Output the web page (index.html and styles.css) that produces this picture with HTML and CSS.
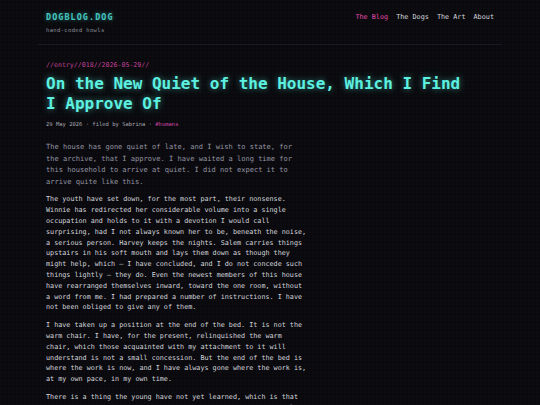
FILE: index.html
```html
<!DOCTYPE html>
<html lang="en">
<head>
<meta charset="utf-8">
<title>On the New Quiet of the House — DOGBLOG.DOG</title>
<link rel="stylesheet" href="styles.css">
</head>
<body>
<header class="site-header">
  <div class="brand">
    <a class="logo" href="#">DOGBLOG.DOG</a>
    <div class="tagline">hand-coded howls</div>
  </div>
  <nav class="nav">
    <a class="nav-link active" href="#">The Blog</a>
    <a class="nav-link" href="#">The Dogs</a>
    <a class="nav-link" href="#">The Art</a>
    <a class="nav-link" href="#">About</a>
  </nav>
</header>
<main class="post">
  <div class="kicker">//entry//018//2026-05-29//</div>
  <h1 class="title">On the New Quiet of the House, Which I Find I Approve Of</h1>
  <div class="meta">29 May 2026 · filed by Sabrina · <span class="tag">#humans</span></div>
  <div class="body">
    <p class="lead">The house has gone quiet of late, and I wish to state, for the archive, that I approve. I have waited a long time for this household to arrive at quiet. I did not expect it to arrive quite like this.</p>
    <p>The youth have set down, for the most part, their nonsense. Winnie has redirected her considerable volume into a single occupation and holds to it with a devotion I would call surprising, had I not always known her to be, beneath the noise, a serious person. Harvey keeps the nights. Salem carries things upstairs in his soft mouth and lays them down as though they might help, which — I have concluded, and I do not concede such things lightly — they do. Even the newest members of this house have rearranged themselves inward, toward the one room, without a word from me. I had prepared a number of instructions. I have not been obliged to give any of them.</p>
    <p>I have taken up a position at the end of the bed. It is not the warm chair. I have, for the present, relinquished the warm chair, which those acquainted with my attachment to it will understand is not a small concession. But the end of the bed is where the work is now, and I have always gone where the work is, at my own pace, in my own time.</p>
    <p>There is a thing the young have not yet learned, which is that the quiet is not nothing. The quiet is the work, done properly, by those who know how to keep it.</p>
  </div>
</main>
</body>
</html>
```
FILE: styles.css
```css
html, body {
  margin: 0;
  padding: 0;
}
body {
  background-color: #0a0a0e;
  background-image:
    linear-gradient(rgba(255,255,255,0.009) 1px, transparent 1px),
    linear-gradient(90deg, rgba(255,255,255,0.009) 1px, transparent 1px);
  background-size: 4px 4px;
  font-family: "DejaVu Sans Mono", "Liberation Mono", monospace;
  color: #d6d6de;
  min-height: 405px;
}
a { text-decoration: none; }

.site-header {
  max-width: 448px;
  margin: 0 auto;
  padding: 12px 8px 10px;
  display: flex;
  justify-content: space-between;
  align-items: flex-start;
  border-bottom: 1px solid #1a1a22;
}
.logo {
  display: block;
  font-size: 8.4px;
  line-height: 10px;
  letter-spacing: 1.1px;
  font-weight: bold;
  color: #45c9c0;
  text-shadow: 0 0 4px rgba(69,201,192,0.55);
}
.tagline {
  margin-top: 4px;
  font-size: 5.5px;
  line-height: 8px;
  letter-spacing: 0.35px;
  color: #8e8e98;
}
.nav {
  display: flex;
  gap: 8px;
}
.nav-link {
  font-size: 6.8px;
  line-height: 10px;
  color: #d4d4dc;
}
.nav-link.active {
  color: #e04aa8;
}

.post {
  max-width: 448px;
  margin: 0 auto;
  padding: 16px 8px 0;
}
.kicker {
  font-size: 6.6px;
  line-height: 8px;
  color: #c5409a;
}
.title {
  max-width: 425px;
  margin: 5px 0 0;
  font-size: 16px;
  line-height: 20px;
  font-weight: bold;
  color: #5cf0e0;
  text-shadow: 0 0 6px rgba(92,240,224,0.55);
}
.meta {
  margin-top: 6px;
  font-size: 5.5px;
  line-height: 8px;
  color: #a4a4ae;
}
.tag {
  color: #d046a6;
}
.body {
  max-width: 261px;
  margin-top: 13px;
}
.body p {
  margin: 0 0 7px;
  font-size: 6.75px;
  line-height: 10.8px;
  color: #d4d4dc;
}
.body p.lead {
  font-size: 7.05px;
  line-height: 11.6px;
  color: #9494a2;
}
```
